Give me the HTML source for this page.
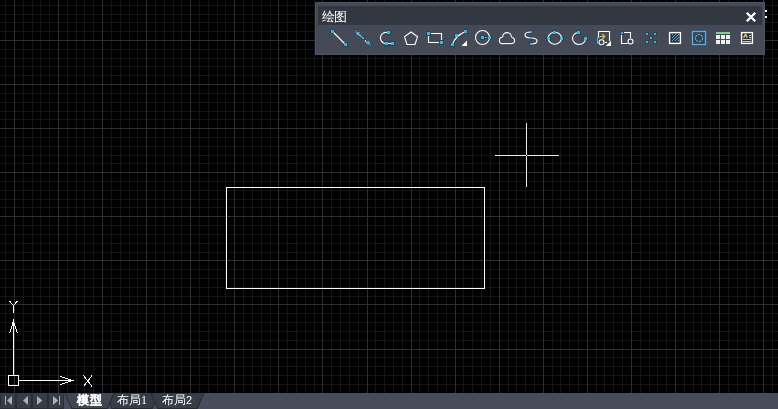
<!DOCTYPE html>
<html><head><meta charset="utf-8"><style>
html,body{margin:0;padding:0;width:778px;height:409px;overflow:hidden;background:#000;}
body{position:relative;font-family:"Liberation Sans",sans-serif;}
svg{position:absolute;left:0;top:0;}
.tb{position:absolute;left:315px;top:2px;width:448px;height:51px;background:#444a56;border:1px solid #4d5461;}
.tt{position:absolute;left:318px;top:6px;width:444px;height:19px;background:#323841;}
.ttl{position:absolute;left:321.5px;top:9px;font-size:13px;letter-spacing:-1px;line-height:15px;color:#fff;will-change:transform;}
.tab{position:absolute;top:393px;font-size:12px;line-height:14px;color:#fff;will-change:transform;}
</style></head><body>
<svg width="778" height="409" viewBox="0 0 778 409" shape-rendering="crispEdges">
<path d="M5.5 0V409M23.5 0V409M32.5 0V409M40.5 0V409M49.5 0V409M67.5 0V409M76.5 0V409M84.5 0V409M93.5 0V409M111.5 0V409M120.5 0V409M129.5 0V409M137.5 0V409M155.5 0V409M164.5 0V409M173.5 0V409M181.5 0V409M199.5 0V409M208.5 0V409M217.5 0V409M225.5 0V409M243.5 0V409M252.5 0V409M261.5 0V409M270.5 0V409M287.5 0V409M296.5 0V409M305.5 0V409M314.5 0V409M331.5 0V409M340.5 0V409M349.5 0V409M358.5 0V409M375.5 0V409M384.5 0V409M393.5 0V409M402.5 0V409M419.5 0V409M428.5 0V409M437.5 0V409M446.5 0V409M463.5 0V409M472.5 0V409M481.5 0V409M490.5 0V409M508.5 0V409M516.5 0V409M525.5 0V409M534.5 0V409M552.5 0V409M560.5 0V409M569.5 0V409M578.5 0V409M596.5 0V409M604.5 0V409M613.5 0V409M622.5 0V409M640.5 0V409M649.5 0V409M657.5 0V409M666.5 0V409M684.5 0V409M693.5 0V409M701.5 0V409M710.5 0V409M728.5 0V409M737.5 0V409M746.5 0V409M754.5 0V409M772.5 0V409M0 5.5H778M0 14.5H778M0 22.5H778M0 31.5H778M0 49.5H778M0 58.5H778M0 66.5H778M0 75.5H778M0 93.5H778M0 102.5H778M0 111.5H778M0 119.5H778M0 137.5H778M0 146.5H778M0 155.5H778M0 163.5H778M0 181.5H778M0 190.5H778M0 199.5H778M0 207.5H778M0 225.5H778M0 234.5H778M0 243.5H778M0 252.5H778M0 269.5H778M0 278.5H778M0 287.5H778M0 296.5H778M0 313.5H778M0 322.5H778M0 331.5H778M0 340.5H778M0 357.5H778M0 366.5H778M0 375.5H778M0 384.5H778M0 401.5H778" stroke="#141517" stroke-width="1"/><path d="M14.5 0V409M58.5 0V409M102.5 0V409M146.5 0V409M190.5 0V409M234.5 0V409M278.5 0V409M322.5 0V409M367.5 0V409M411.5 0V409M455.5 0V409M499.5 0V409M543.5 0V409M587.5 0V409M631.5 0V409M675.5 0V409M719.5 0V409M763.5 0V409M0 40.5H778M0 84.5H778M0 128.5H778M0 172.5H778M0 216.5H778M0 260.5H778M0 304.5H778M0 349.5H778M0 393.5H778" stroke="#2a3038" stroke-width="1"/>
<rect x="226.5" y="187.5" width="258" height="101" fill="none" stroke="#fff" stroke-width="1"/>
<path d="M526.5 122V154M526.5 157V187M494 155.5H525M528 155.5H559" stroke="#000" stroke-width="3" stroke-opacity="0.55"/>
<path d="M526.5 123V187M495 155.5H559" stroke="#ececea" stroke-width="1"/>
<rect x="526" y="155" width="1" height="1" fill="#000"/>
</svg>
<svg width="778" height="409" viewBox="0 0 778 409">
<g stroke="#fff" fill="none" stroke-width="1" shape-rendering="crispEdges">
<rect x="8.5" y="375.5" width="10" height="10"/>
<path d="M13.5 375V322M19 380.5H72"/>
</g>
<g stroke="#fff" fill="none" stroke-width="1" shape-rendering="crispEdges">
<path d="M9.5 333.5L13.5 321L17.5 333.5M60.5 376.5L72.5 380.5L60.5 384.5"/>
<path d="M9.5 301L13.5 305.5L17.5 301M13.5 305.5V312.5"/>
<path d="M83.5 375.5L92 386.5M92 375.5L83.5 386.5"/>
</g>
</svg>
<div class="tb"></div><div class="tt"></div>
<div class="ttl">绘图</div>
<svg width="778" height="409" viewBox="0 0 778 409">
<path d="M746.8 12.8L755.2 21.2M755.2 12.8L746.8 21.2" stroke="#fff" stroke-width="2.3"/>
<rect x="765" y="10" width="2" height="2" fill="#fff"/><rect x="765" y="16" width="2" height="2" fill="#fff"/>
<rect x="330.5" y="29.5" width="4" height="4" fill="none" stroke="#393e46" stroke-width="1"/><rect x="343.5" y="42.5" width="4" height="4" fill="none" stroke="#393e46" stroke-width="1"/><rect x="361.5" y="36.5" width="3" height="3" fill="none" stroke="#393e46" stroke-width="1"/><rect x="354.5" y="29.5" width="2" height="2" fill="none" stroke="#393e46" stroke-width="1"/><rect x="369.5" y="44.5" width="2" height="2" fill="none" stroke="#393e46" stroke-width="1"/><rect x="386.5" y="30.5" width="4" height="4" fill="none" stroke="#393e46" stroke-width="1"/><rect x="384.5" y="41.5" width="4" height="4" fill="none" stroke="#393e46" stroke-width="1"/><rect x="390.5" y="41.5" width="4" height="4" fill="none" stroke="#393e46" stroke-width="1"/><rect x="426.5" y="31.5" width="4" height="4" fill="none" stroke="#393e46" stroke-width="1"/><rect x="439.5" y="40.5" width="4" height="4" fill="none" stroke="#393e46" stroke-width="1"/><rect x="450.5" y="42.5" width="4" height="4" fill="none" stroke="#393e46" stroke-width="1"/><rect x="454.5" y="33.5" width="4" height="4" fill="none" stroke="#393e46" stroke-width="1"/><rect x="463.5" y="29.5" width="4" height="4" fill="none" stroke="#393e46" stroke-width="1"/><rect x="480.5" y="35.5" width="4" height="4" fill="none" stroke="#393e46" stroke-width="1"/><rect x="484.5" y="36.5" width="3" height="2" fill="none" stroke="#393e46" stroke-width="1"/><rect x="487.5" y="35.5" width="4" height="4" fill="none" stroke="#393e46" stroke-width="1"/><rect x="529.5" y="30.5" width="3" height="3" fill="none" stroke="#393e46" stroke-width="1"/><rect x="529.5" y="36.5" width="3" height="3" fill="none" stroke="#393e46" stroke-width="1"/><rect x="529.5" y="42.5" width="3" height="3" fill="none" stroke="#393e46" stroke-width="1"/><rect x="552.5" y="30.5" width="4" height="4" fill="none" stroke="#393e46" stroke-width="1"/><rect x="546.5" y="36.5" width="4" height="4" fill="none" stroke="#393e46" stroke-width="1"/><rect x="559.5" y="36.5" width="4" height="4" fill="none" stroke="#393e46" stroke-width="1"/><rect x="576.5" y="30.5" width="4" height="4" fill="none" stroke="#393e46" stroke-width="1"/><rect x="583.5" y="36.5" width="4" height="4" fill="none" stroke="#393e46" stroke-width="1"/><rect x="620.5" y="31.5" width="3" height="3" fill="none" stroke="#393e46" stroke-width="1"/><rect x="645.5" y="32.5" width="3" height="3" fill="none" stroke="#393e46" stroke-width="1"/><rect x="653.5" y="32.5" width="3" height="3" fill="none" stroke="#393e46" stroke-width="1"/><rect x="649.5" y="36.5" width="3" height="3" fill="none" stroke="#393e46" stroke-width="1"/><rect x="645.5" y="40.5" width="3" height="3" fill="none" stroke="#393e46" stroke-width="1"/><rect x="653.5" y="40.5" width="3" height="3" fill="none" stroke="#393e46" stroke-width="1"/><path d="M333.5 32.5L344.5 43.5" stroke="#fff" stroke-width="1.1"/><rect x="331" y="30" width="3" height="3" fill="#22bcf6"/><rect x="344" y="43" width="3" height="3" fill="#22bcf6"/><path d="M358 33.5L361.5 37M365 40.5L368.5 44" stroke="#fff" stroke-width="1.1" stroke-dasharray="1.4 0.7"/><rect x="362" y="37" width="2" height="2" fill="#22bcf6"/><path d="M355.6 31.2L360 32.6L357 35.6Z" fill="#22bcf6"/><path d="M370.4 44.8L366 43.4L369 40.4Z" fill="#22bcf6"/><rect x="355" y="30" width="1" height="1" fill="#22bcf6"/><rect x="370" y="45" width="1" height="1" fill="#22bcf6"/><path d="M387 32.5A5.5 5.5 0 0 0 385 43.5H392" stroke="#fff" stroke-width="1.1" fill="none"/><rect x="387" y="31" width="3" height="3" fill="#22bcf6"/><rect x="385" y="42" width="3" height="3" fill="#22bcf6"/><rect x="391" y="42" width="3" height="3" fill="#22bcf6"/><path d="M411 32L417.5 36.8L415 44.5H407L404.5 36.8Z" stroke="#fff" stroke-width="1.1" fill="none"/><path d="M431 33.5H441.5V40M428.5 36V42.5H439" stroke="#fff" stroke-width="1.1" fill="none"/><rect x="427" y="32" width="3" height="3" fill="#22bcf6"/><rect x="440" y="41" width="3" height="3" fill="#22bcf6"/><path d="M452.5 44.5Q455 36 465.5 31.5" stroke="#fff" stroke-width="1.2" fill="none"/><rect x="451" y="43" width="3" height="3" fill="#22bcf6"/><rect x="455" y="34" width="3" height="3" fill="#22bcf6"/><rect x="464" y="30" width="3" height="3" fill="#22bcf6"/><path d="M461.5 46H467V40.5Z" fill="#fff"/><circle cx="482.5" cy="37.5" r="7" stroke="#fff" stroke-width="1.1" fill="none"/><rect x="481" y="36" width="3" height="3" fill="#22bcf6"/><rect x="485" y="37" width="2" height="1" fill="#22bcf6"/><rect x="488" y="36" width="3" height="3" fill="#22bcf6"/><g fill="#fff"><circle cx="502.6" cy="40.4" r="3.75"/><circle cx="507" cy="36.9" r="4.85"/><circle cx="511.5" cy="40.5" r="3.6"/><rect x="502.6" y="37" width="8.9" height="7.15"/></g><g fill="#444a56"><circle cx="502.6" cy="40.4" r="2.65"/><circle cx="507" cy="36.9" r="3.75"/><circle cx="511.5" cy="40.5" r="2.5"/><rect x="502.6" y="37" width="8.9" height="6.05"/></g><path d="M531 32Q525 32 525 35Q525 38 531 38Q537 38 537 41Q537 44 531 44" stroke="#fff" stroke-width="1.1" fill="none"/><rect x="530" y="31" width="2" height="2" fill="#22bcf6"/><rect x="530" y="37" width="2" height="2" fill="#22bcf6"/><rect x="530" y="43" width="2" height="2" fill="#22bcf6"/><ellipse cx="554.8" cy="38.2" rx="6.6" ry="6" stroke="#fff" stroke-width="1.1" fill="none"/><rect x="553" y="31" width="3" height="3" fill="#22bcf6"/><rect x="547" y="37" width="3" height="3" fill="#22bcf6"/><rect x="560" y="37" width="3" height="3" fill="#22bcf6"/><path d="M578 32.5A6.5 6 0 1 0 585.5 38.5" stroke="#fff" stroke-width="1.1" fill="none"/><rect x="577" y="31" width="3" height="3" fill="#22bcf6"/><rect x="584" y="37" width="3" height="3" fill="#22bcf6"/><path d="M598.5 37V31.5H609.5V41" stroke="#fff" stroke-width="1.1" fill="none"/><path d="M597.5 44V37.5H600" stroke="#22bcf6" stroke-width="1.1" fill="none"/><path d="M600 36.5H605M602.3 34L604.8 36.5L602.3 39" stroke="#f5b82e" stroke-width="1.2" fill="none"/><circle cx="601.5" cy="42.3" r="2.5" stroke="#fff" stroke-width="1.1" fill="none"/><path d="M605 42.5H607" stroke="#fff" stroke-width="1.1"/><path d="M605.8 46H611V40.8Z" fill="#fff"/><path d="M621.5 35V43.5H627.5M624 32.5H630.5V38" stroke="#fff" stroke-width="1.1" fill="none"/><circle cx="630.5" cy="41.5" r="2.5" stroke="#fff" stroke-width="1.1" fill="none"/><rect x="621" y="32" width="2" height="2" fill="#22bcf6"/><rect x="646" y="33" width="2" height="2" fill="#22bcf6"/><rect x="654" y="33" width="2" height="2" fill="#22bcf6"/><rect x="650" y="37" width="2" height="2" fill="#22bcf6"/><rect x="646" y="41" width="2" height="2" fill="#22bcf6"/><rect x="654" y="41" width="2" height="2" fill="#22bcf6"/><rect x="669.6" y="32.6" width="10.8" height="10.8" stroke="#fff" stroke-width="1.4" fill="#2e333b"/><path d="M671.5 35.5L672.5 34.5M671.5 38.5L675.5 34.5M671.5 41.5L678.5 34.5M674.5 41.5L678.5 37.5M677.5 41.5L678.5 40.5" stroke="#45b2fa" stroke-width="1" shape-rendering="crispEdges"/><rect x="692.5" y="31.5" width="13" height="13" stroke="#4ab4f5" stroke-width="1.3" fill="#3a3f48"/><circle cx="699" cy="38" r="3.6" stroke="#4ab4f5" stroke-width="1.1" fill="none" stroke-dasharray="2.2 0.9"/><rect x="716" y="32" width="14" height="2" fill="#6fd68a"/><rect x="716" y="35" width="4" height="4" fill="#eee"/><rect x="721" y="35" width="4" height="4" fill="#eee"/><rect x="726" y="35" width="4" height="4" fill="#eee"/><rect x="716" y="40" width="4" height="4" fill="#eee"/><rect x="721" y="40" width="4" height="4" fill="#eee"/><rect x="726" y="40" width="4" height="4" fill="#eee"/><rect x="741.6" y="32.6" width="10.8" height="10.8" stroke="#fff" stroke-width="1.4" fill="#2e333b"/><path d="M743.6 37.6L745.5 34.6L747.4 37.6" stroke="#f5c12e" stroke-width="1.6" fill="none"/><path d="M749 35.5H751M749 37.5H751M743 39.5H751M743 41.5H751" stroke="#b8cde6" stroke-width="1"/>
</svg>
<svg width="778" height="409" viewBox="0 0 778 409">
<rect x="0" y="393" width="778" height="16" fill="#464c5a"/>
<g shape-rendering="crispEdges">
<rect x="0" y="393" width="64" height="16" fill="#2a2f36"/>
<rect x="0" y="393" width="64" height="1" fill="#363d46"/>
<rect x="1" y="394" width="14" height="14" fill="#363d46"/>
<rect x="17" y="394" width="14" height="14" fill="#363d46"/>
<rect x="33" y="394" width="14" height="14" fill="#363d46"/>
<rect x="49" y="394" width="14" height="14" fill="#363d46"/>
</g>
<g fill="#a9b0b9">
<rect x="5" y="396" width="1" height="9"/><path d="M7 400.5L12 396V405Z"/>
<path d="M23 400.5L28 396V405Z"/>
<path d="M37 396V405L42.3 400.5Z"/>
<path d="M53 396V405L58.3 400.5Z"/><rect x="59" y="396" width="1" height="9"/>
</g>
<path d="M105 393L112 409H152L159 393Z" fill="#363d46"/><path d="M105 393L112 409M152 409L159 393M112 408.5H152" stroke="#262a30" stroke-width="1"/>
<path d="M151 393L158 409H197L204 393Z" fill="#363d46"/><path d="M151 393L158 409M197 409L204 393M158 408.5H197" stroke="#262a30" stroke-width="1"/>
<path d="M65 393L72 409H107L114 393Z" fill="#404753"/><path d="M65 393L72 409M107 409L114 393M72 408.5H107" stroke="#262a30" stroke-width="1"/>
</svg>
<div class="tab" style="left:77px;top:392.5px;font-weight:bold;font-size:12px;line-height:14px;letter-spacing:1px;-webkit-text-stroke:0.3px #fff;">模型</div>
<div class="tab" style="left:117px;">布局<span style="font-size:12px;font-family:'Liberation Serif',serif">1</span></div>
<div class="tab" style="left:162px;">布局<span style="font-size:11px">2</span></div>
</body></html>
